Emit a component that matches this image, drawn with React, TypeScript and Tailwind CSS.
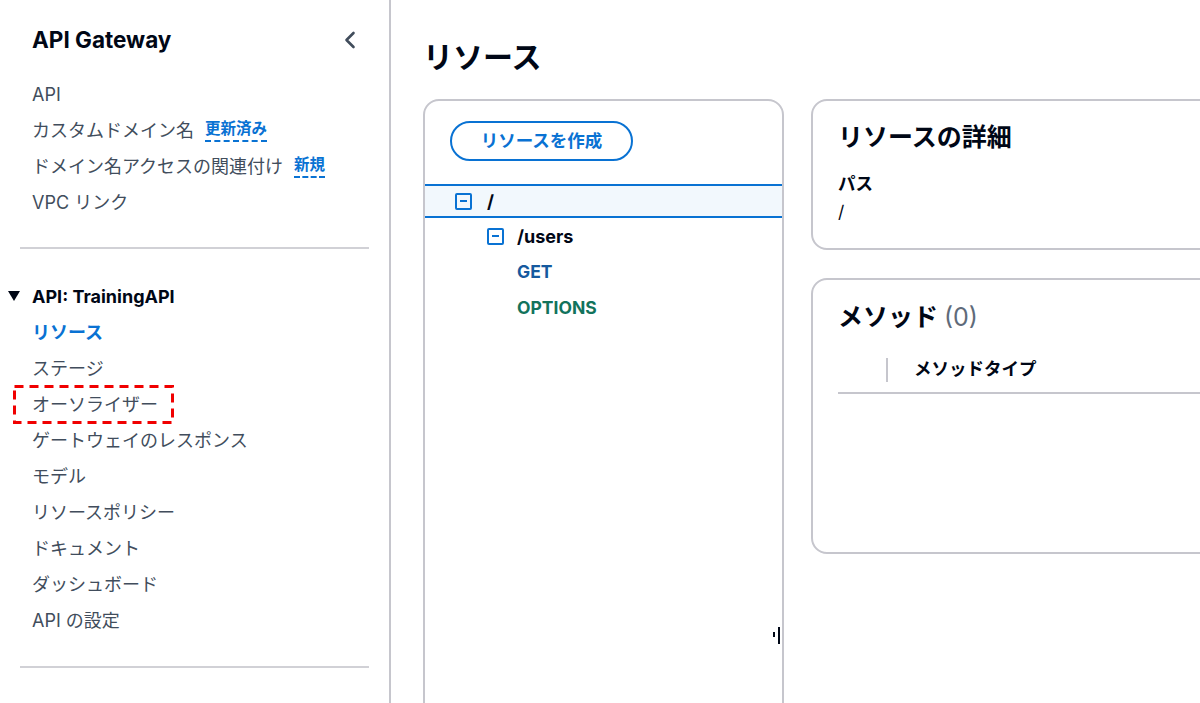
import React from "react";

const FONT = { fontFamily: 'Inter, "Noto Sans CJK JP", sans-serif' };

function MinusBox() {
  return (
    <span className="inline-flex h-[17px] w-[17px] shrink-0 items-center justify-center rounded-[2px] border-2 border-[#0972d3]">
      <span className="block h-[2px] w-[7px] bg-[#0972d3]" />
    </span>
  );
}

function NavItem({ children, active }: { children: React.ReactNode; active?: boolean }) {
  return (
    <div
      className={
        "flex h-[36px] items-center pl-8 text-[18px] " +
        (active ? "font-bold text-[#0972d3]" : "text-[#414d5c]")
      }
    >
      {children}
    </div>
  );
}

function Badge({ children }: { children: React.ReactNode }) {
  return (
    <span className="ml-[11px] border-b-2 border-dashed border-[#0972d3] pb-[1px] text-[15.5px] font-bold leading-[20px] text-[#0972d3]">
      {children}
    </span>
  );
}

export default function App() {
  return (
    <div style={FONT} className="flex h-[703px] w-[1200px] overflow-hidden bg-white text-[#000716]">
      {/* Sidebar */}
      <aside className="h-full w-[391px] shrink-0 overflow-hidden border-r-2 border-[#c6c6cd]">
        <div className="flex items-center justify-between pl-8 pr-[33px] pt-[26px]">
          <h2 className="text-[22.5px] font-bold leading-[28px] text-[#000716]">API Gateway</h2>
          <svg width="12" height="18" viewBox="0 0 12 18" fill="none">
            <path d="M9.5 2 L2.5 9 L9.5 16" stroke="#414d5c" strokeWidth="2.6" strokeLinecap="round" strokeLinejoin="round" />
          </svg>
        </div>
        <nav className="mt-[22px]">
          <NavItem>API</NavItem>
          <NavItem>
            カスタムドメイン名<Badge>更新済み</Badge>
          </NavItem>
          <NavItem>
            ドメイン名アクセスの関連付け<Badge>新規</Badge>
          </NavItem>
          <NavItem>VPC リンク</NavItem>
        </nav>
        <div className="mx-5 mt-[27px] h-[2px] bg-[#d1d1d6]" />
        <div className="mt-[29px]">
          <div className="flex h-[36px] items-center pl-2">
            <svg width="12" height="10" viewBox="0 0 12 10">
              <path d="M0 0 H12 L6 10 Z" fill="#000716" />
            </svg>
            <span className="ml-[12px] text-[18px] font-bold text-[#000716]">API: TrainingAPI</span>
          </div>
          <NavItem active>リソース</NavItem>
          <NavItem>ステージ</NavItem>
          <div className="relative">
            <NavItem>オーソライザー</NavItem>
            <svg
              className="pointer-events-none absolute left-[13px] top-[-1px]"
              width="161"
              height="39"
              viewBox="0 0 161 39"
              fill="none"
            >
              <rect x="1.5" y="1.5" width="158" height="36" stroke="#f00000" strokeWidth="3" strokeDasharray="9 6" />
            </svg>
          </div>
          <NavItem>ゲートウェイのレスポンス</NavItem>
          <NavItem>モデル</NavItem>
          <NavItem>リソースポリシー</NavItem>
          <NavItem>ドキュメント</NavItem>
          <NavItem>ダッシュボード</NavItem>
          <NavItem>API の設定</NavItem>
        </div>
        <div className="mx-5 mt-[28px] h-[2px] bg-[#d1d1d6]" />
        <div className="mt-[27px]">
          <NavItem>使用量プラン</NavItem>
        </div>
      </aside>

      {/* Main */}
      <main className="min-w-0 flex-1 overflow-hidden pl-8 pt-[39px]">
        <h1 className="text-[30px] font-bold leading-[36px] text-[#000716]">リソース</h1>
        <div className="mt-[24px] flex items-start gap-[27px]">
          {/* Left tree card */}
          <div className="relative h-[700px] w-[361px] shrink-0 rounded-[16px] border-2 border-[#c6c6cd] pt-[20px]">
            <button className="ml-[25px] flex h-[40px] w-[183px] items-center justify-center rounded-full border-2 border-[#0972d3] text-[17.5px] font-bold text-[#0972d3]">
              リソースを作成
            </button>
            <div className="mt-[23px]">
              <div className="flex h-[34px] items-center border-y-2 border-[#0972d3] bg-[#f2f8fd] pl-[30px]">
                <MinusBox />
                <span className="ml-[15px] text-[18px] font-bold text-[#000716]">/</span>
              </div>
              <div className="flex h-[36px] items-center pl-[62px]">
                <MinusBox />
                <span className="ml-[13px] text-[18px] font-bold text-[#000716]">/users</span>
              </div>
              <div className="flex h-[36px] items-center pl-[92px] text-[17.5px] font-bold text-[#15599e]">GET</div>
              <div className="flex h-[36px] items-center pl-[92px] text-[17.5px] font-bold text-[#12735c]">OPTIONS</div>
            </div>
            {/* resize handle */}
            <div className="absolute left-[348px] top-[531px] h-[5px] w-[2px] bg-[#000716]" />
            <div className="absolute left-[353px] top-[526px] h-[17px] w-[2px] bg-[#000716]" />
          </div>

          {/* Right column */}
          <div className="flex w-[450px] shrink-0 flex-col gap-[28px]">
            <div className="rounded-[16px] border-2 border-[#c6c6cd] pb-[22px] pl-[25px] pt-[20px]">
              <h2 className="text-[25px] font-bold leading-[32px] text-[#000716]">リソースの詳細</h2>
              <div className="mt-[17px] text-[17.5px] font-bold leading-[28px] text-[#000716]">パス</div>
              <div className="text-[17.5px] leading-[28px] text-[#000716]">/</div>
            </div>
            <div className="h-[276px] rounded-[16px] border-2 border-[#c6c6cd] pl-[25px] pt-[21px]">
              <h2 className="text-[25px] font-bold leading-[32px] text-[#000716]">
                メソッド <span className="font-normal text-[#5f6b7a]">(0)</span>
              </h2>
              <div className="mt-[14px] flex h-[47px] items-center border-b-2 border-[#c6c6cd]">
                <span className="ml-[48px] block h-[24px] w-[2px] bg-[#c6c6cd]" />
                <span className="ml-[26px] text-[17.5px] font-bold text-[#000716]">メソッドタイプ</span>
              </div>
            </div>
          </div>
        </div>
      </main>
    </div>
  );
}
